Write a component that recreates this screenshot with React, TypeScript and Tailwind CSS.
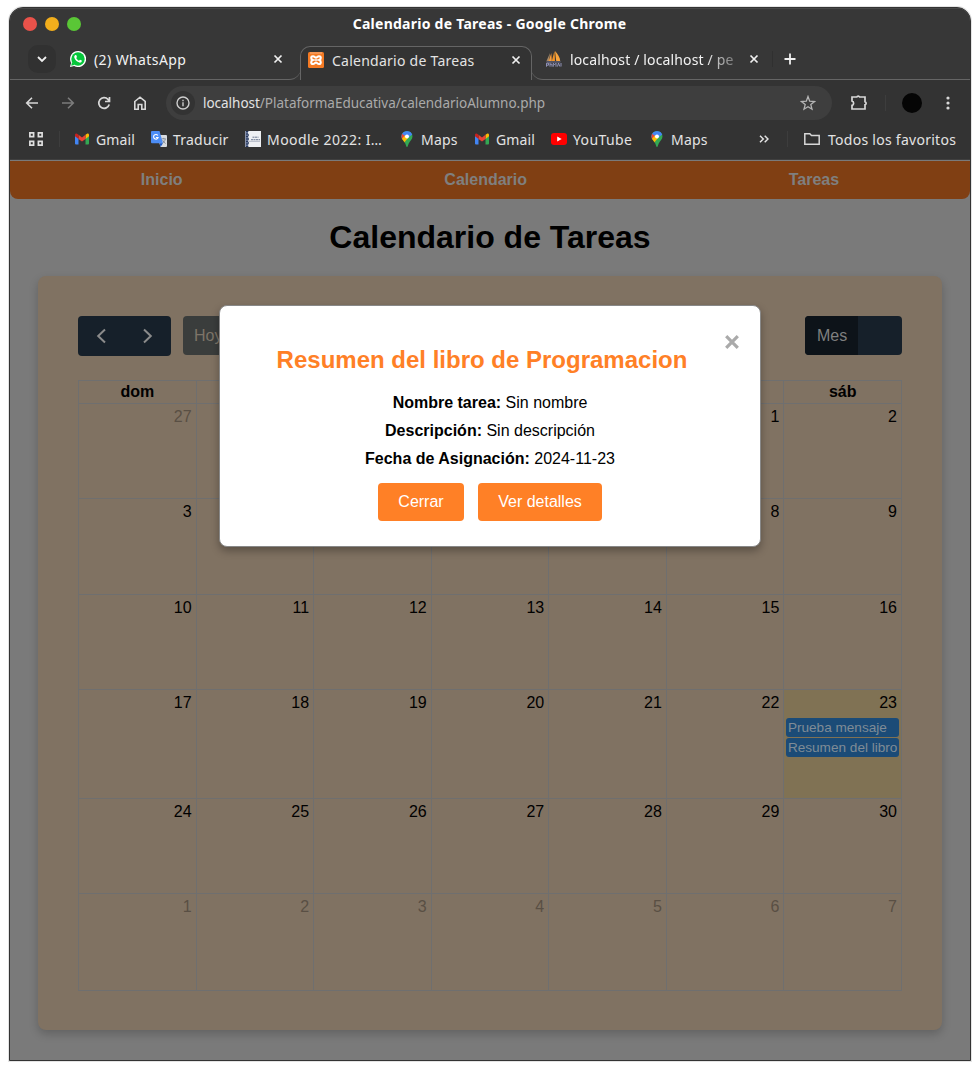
import React from "react";

const UI = "font-['Noto_Sans',sans-serif]";

const days = ["dom", "", "", "", "", "", "sáb"];
const weeks = [
  { h: "h-[95px]", d: [27, null, null, null, null, 1, 2] },
  { h: "h-[96px]", d: [3, null, null, null, null, 8, 9] },
  { h: "h-[95px]", d: [10, 11, 12, 13, 14, 15, 16] },
  { h: "h-[109px]", d: [17, 18, 19, 20, 21, 22, 23] },
  { h: "h-[95px]", d: [24, 25, 26, 27, 28, 29, 30] },
  { h: "h-[97px]", d: [1, 2, 3, 4, 5, 6, 7] },
];

function Close({ className = "" }: { className?: string }) {
  return (
    <svg viewBox="0 0 10 10" className={`h-[10px] w-[10px] shrink-0 ${className}`} stroke="#f0f0f0" strokeWidth="1.7" fill="none">
      <path d="M1.5 1.5l7 7M8.5 1.5l-7 7" />
    </svg>
  );
}

function WhatsApp() {
  return (
    <svg viewBox="0 0 16 16" className="h-4 w-4 shrink-0">
      <path d="M8 0a8 8 0 0 0-6.9 12L0 16l4.1-1.1A8 8 0 1 0 8 0z" fill="#fff" />
      <circle cx="8" cy="8" r="6.7" fill="#06c73b" />
      <path d="M2 11l-.8 3.8 3.7-1z" fill="#06c73b" />
      <path d="M5.4 4.1c-.9.4-1.4 1.300-1.100 2.500.7 2.500 2.700 4.500 5.200 5 1.200.2 2.200-.6 2.300-1.600v-.4L10 8.800l-1 1C7.700 9.300 6.700 8.300 6.200 7.100l.8-1-.8-2z" fill="#fff" />
    </svg>
  );
}

function Xampp() {
  return (
    <svg viewBox="0 0 16 16" className="h-4 w-4 shrink-0">
      <rect width="16" height="16" rx="1.500" fill="#f47a24" />
      <path d="M2 1h12" stroke="#fbc39c" strokeWidth=".8" />
      <path d="M4.800 8C2.500 7 2.700 4.200 5 4.200c1.600 0 1.800 1.500 3 1.500s1.400-1.500 3-1.500c2.300 0 2.500 2.800.2 3.800 2.300 1 2.100 4-.2 4-1.600 0-1.800-1.500-3-1.500S6.600 12 5 12c-2.300 0-2.500-3-.2-4z" fill="none" stroke="#fff" strokeWidth="2" />
      <path d="M6.500 8h3" stroke="#fff" strokeWidth="1.600" />
    </svg>
  );
}

function PhpMyAdmin() {
  return (
    <svg viewBox="0 0 17 16" className="h-4 w-[17px] shrink-0">
      <path d="M5 2L1.500 10H4z" fill="#a98a65" />
      <path d="M6.300 2l.5 8H3.700z" fill="#f59b3b" />
      <path d="M9.500 0L6.800 10h3.200z" fill="#f29325" />
      <path d="M10 0c2.600 3 5 6 5.200 10h-4z" fill="#f9a43c" />
      <path d="M1 10.500h15l-1 .9H2z" fill="#6e7092" />
      <path d="M1.500 15.700v-3.500h2v2h-2M5 11.700v4M5 13.200h2v2.500M8.300 15.700v-3.500l1.300 1.500L11 12.200v3.500M12.500 15.500l1-3.500 1.300 3.500M16 12v3.500" stroke="#9a9cc4" strokeWidth=".9" fill="none" />
    </svg>
  );
}

function Gmail() {
  return (
    <svg viewBox="0 0 16 12" className="h-[12px] w-4 shrink-0">
      <path d="M1 2.500l3.500 2.600V11.500H2A1 1 0 0 1 1 10.500z" fill="#4285f4" />
      <path d="M15 2.500l-3.500 2.600v6.400H14a1 1 0 0 0 1-1z" fill="#34a853" />
      <path d="M11.500 1.800L13 .8c1-.6 2 0 2 1.200v1.200l-3.500 2.700z" fill="#fbbc04" />
      <path d="M4.500 1.800L8 4.500l3.500-2.700v4.100L8 8.600 4.500 5.900z" fill="#ea4335" />
      <path d="M4.500 1.800L3 .8C2 .2 1 .8 1 2v1.200l3.500 2.700z" fill="#c5221f" />
    </svg>
  );
}

function Translate() {
  return (
    <svg viewBox="0 0 16 16" className="h-4 w-4 shrink-0">
      <path d="M6 4h9a1 1 0 0 1 1 1v10a1 1 0 0 1-1 1H9.500z" fill="#d9dce0" />
      <path d="M1 0h7.500l3.500 12.300H1a1 1 0 0 1-1-1V1a1 1 0 0 1 1-1z" fill="#4c8df6" />
      <path d="M8.700 12.300H12L9.500 16z" fill="#1a56c4" />
      <path d="M6.800 4.500A2.300 2.300 0 1 0 7.100 6.500H4.900" stroke="#fff" strokeWidth="1.100" fill="none" />
      <path d="M10.800 7.800h4M12.700 6.900v1M14.300 8c-.3 1.900-1.500 3.300-2.800 4.300M11.700 9.200c.6 1.400 1.500 2.500 2.900 3.300" stroke="#77808e" strokeWidth=".8" fill="none" />
    </svg>
  );
}

function Moodle() {
  return (
    <svg viewBox="0 0 16 16" className="h-4 w-4 shrink-0">
      <rect width="16" height="16" fill="#eef0f3" />
      <path d="M.5 0h3L2.800 2 4 4 3 6l1 2-1 2 1 2-1 2 .5 2h-3z" fill="#26375e" />
      <path d="M2 1v14" stroke="#aebbd4" strokeWidth=".9" strokeDasharray="1.500 1" />
      <path d="M7.500 6.200h6M6 8.700h9" stroke="#6b7890" strokeWidth="1" strokeDasharray="2 .5" />
      <path d="M4 10.300h11" stroke="#8690a5" strokeWidth=".6" />
    </svg>
  );
}

function Pin() {
  return (
    <svg viewBox="0 0 12 16" className="h-4 w-3 shrink-0">
      <defs>
        <clipPath id="pin"><path d="M6 0a5.500 5.500 0 0 0-5.500 5.500C.5 8.500 3 9.800 4.300 12.500 5 14 5.200 16 6 16s1-2 1.700-3.500C9 9.800 11.500 8.500 11.500 5.500A5.500 5.500 0 0 0 6 0z" /></clipPath>
      </defs>
      <g clipPath="url(#pin)">
        <path d="M0 0h12v16H0z" fill="#34a853" />
        <path d="M0 10L11 0H0z" fill="#4285f4" />
        <path d="M0 2l4.500 3.500L0 10z" fill="#ea4335" />
        <path d="M0 8.800L4.300 4 7 7l-5 6z" fill="#fbbc04" />
        <path d="M4.500 5L9 0h3v3L8 6z" fill="#4285f4" />
      </g>
      <circle cx="6" cy="5.500" r="2" fill="#fff" />
    </svg>
  );
}

function YouTube() {
  return (
    <svg viewBox="0 0 16 12" className="h-3 w-4 shrink-0">
      <rect width="16" height="12" rx="3" fill="#f00" />
      <path d="M6.200 3.500v5l4.500-2.500z" fill="#fff" />
    </svg>
  );
}

function Bookmark({ icon, label, box, text }: { icon: React.ReactNode; label: string; box: string; text: string }) {
  return (
    <div className={`flex shrink-0 items-center whitespace-nowrap ${box}`}>
      {icon}
      <span className={text}>{label}</span>
    </div>
  );
}

function Browser() {
  return (
    <header className={`h-[153px] shrink-0 text-[14px] text-[#e3e3e3] ${UI}`}>
      <div className="relative flex h-[32px] items-center justify-center border-t border-[#484848] bg-[#373737]">
        <div className="absolute left-[13px] top-[8px] flex gap-2">
          <i className="h-[14px] w-[14px] rounded-full bg-[#ea524a]" />
          <i className="h-[14px] w-[14px] rounded-full bg-[#f2ae1c]" />
          <i className="h-[14px] w-[14px] rounded-full bg-[#5ac736]" />
        </div>
        <div className="pr-[1px] pb-[2px] text-[14px] font-bold tracking-[0.26px] text-white">Calendario de Tareas - Google Chrome</div>
      </div>

      <div className="flex h-[40px] bg-[#373737]">
        <div className="flex w-[291px] items-center border-b border-[#656565] rounded-br-[12px] pb-px text-[#f2f2f2]">
          <div className="ml-[18px] flex h-7 w-7 items-center justify-center rounded-[10px] bg-[#313131]">
            <svg viewBox="0 0 10 7" className="h-[7px] w-[10px]" fill="none" stroke="#f0f0f0" strokeWidth="1.800"><path d="M1 1l4 4 4-4" /></svg>
          </div>
          <span className="ml-[14px] flex"><WhatsApp /></span>
          <span className="ml-2 w-[179px] tracking-[0.4px]">(2) WhatsApp</span>
          <Close />
        </div>
        <div className="-ml-px mt-[6px] flex h-[34px] w-[232px] items-center rounded-t-[10px] border border-b-0 border-[#656565] bg-[#333] pb-[7px]">
          <span className="ml-[7px] flex"><Xampp /></span>
          <span className="ml-2 w-[179px] whitespace-nowrap tracking-[0.25px]">Calendario de Tareas</span>
          <Close />
        </div>
        <div className="-ml-px flex flex-1 items-center rounded-bl-[12px] border-b border-[#656565] pb-px text-[#f2f2f2]">
          <span className="ml-[14px] flex"><PhpMyAdmin /></span>
          <span className="ml-[8px] w-[167px] overflow-hidden whitespace-nowrap tracking-[0.14px] [mask-image:linear-gradient(to_right,#000_135px,transparent_180px)]">localhost / localhost / pe</span>
          <Close className="ml-[12px]" />
          <i className="ml-[13px] h-4 w-px bg-[#303030]" />
          <svg viewBox="0 0 12 12" className="ml-[11px] h-3 w-3" stroke="#f0f0f0" strokeWidth="1.800"><path d="M6 .5v11M.5 6h11" /></svg>
        </div>
      </div>

      <div className="flex h-[46px] items-center bg-[#333]">
        <svg viewBox="0 0 14 14" className="ml-[15px] h-[14px] w-[14px]" fill="none" stroke="#d8d8d8" strokeWidth="1.600"><path d="M13 7H2M7 1.700L1.700 7 7 12.300" /></svg>
        <svg viewBox="0 0 14 14" className="ml-[22px] h-[14px] w-[14px]" fill="none" stroke="#7c7c7c" strokeWidth="1.600"><path d="M1 7h11M7 1.700L12.300 7 7 12.300" /></svg>
        <svg viewBox="0 0 14 14" className="ml-[22px] h-[14px] w-[14px]" fill="none" stroke="#d8d8d8" strokeWidth="1.700"><path d="M12.200 8.500A5.300 5.300 0 1 1 11 3.400L12 5M12.500 1v4.500H8" /></svg>
        <svg viewBox="0 0 14 14" className="ml-[22px] h-[14px] w-[14px]" fill="none" stroke="#d8d8d8" strokeWidth="1.600"><path d="M1.800 5.500L7 1.200l5.200 4.300v7.700H8.800V8.500H5.200v4.700H1.800z" /></svg>
        <div className="ml-[19px] flex h-[34px] w-[666px] items-center rounded-full bg-[#3e3e3e]">
          <div className="ml-[5px] flex h-6 w-6 items-center justify-center rounded-full bg-[#333]">
            <svg viewBox="0 0 14 14" className="h-[14px] w-[14px]" fill="none" stroke="#cdcdcd" strokeWidth="1.400"><circle cx="7" cy="7" r="6" /><path d="M7 6.200v4M7 3.700v1.500" /></svg>
          </div>
          <div className="ml-2 flex-1 whitespace-nowrap text-[13.500px] tracking-[-0.02px] text-[#aaa]"><span className="text-[#e3e3e3]">localhost</span>/PlataformaEducativa/calendarioAlumno.php</div>
          <svg viewBox="0 0 16 16" className="mr-4 h-4 w-4" fill="none" stroke="#b5b5b5" strokeWidth="1.300"><path d="M8 1.500l1.700 4.700 4.900.3-3.800 3.100 1.200 4.600L8 11.700l-4 2.500 1.200-4.600L1.400 6.500l4.900-.3z" /></svg>
        </div>
        <svg viewBox="0 0 18 18" className="ml-[18px] h-[18px] w-[18px]" fill="none" stroke="#d8d8d8" strokeWidth="1.700"><path d="M2 3h4.800a1.500 1.500 0 0 1 2.800 0H15v4.800a1.500 1.500 0 0 1 0 2.900V15H2v-3.600a2.300 2.300 0 0 0 0-4.400z" /></svg>
        <i className="ml-[17px] h-4 w-px bg-[#3d3d3d]" />
        <i className="ml-[16px] h-5 w-5 rounded-full bg-[#050505]" />
        <svg viewBox="0 0 4 14" className="ml-[24px] h-[14px] w-1" fill="#d8d8d8"><circle cx="2" cy="2" r="1.600" /><circle cx="2" cy="7" r="1.600" /><circle cx="2" cy="12" r="1.600" /></svg>
      </div>

      <div className="flex h-[34px] items-center border-b border-[#3f3f3f] bg-[#333] pb-[7px]">
        <svg viewBox="0 0 14 14" className="ml-[19px] h-[14px] w-[14px]" fill="none" stroke="#e0e0e0" strokeWidth="1.700"><path d="M.9.900h3.700v3.700H.9zM9.400.9h3.700v3.700H9.400zM.9 9.400h3.700v3.700H.9zM9.400 9.400h3.700v3.700H9.400z" /></svg>
        <i className="ml-[16px] h-4 w-px bg-[#3d3d3d]" />
        <Bookmark icon={<Gmail />} label="Gmail" box="ml-[14px] w-[77px]" text="ml-[6px] tracking-[0.1px]" />
        <Bookmark icon={<Translate />} label="Traducir" box="w-[94px]" text="ml-[6px] tracking-[0.22px]" />
        <Bookmark icon={<Moodle />} label="Moodle 2022: I…" box="w-[155px]" text="ml-[6px] tracking-[0.45px]" />
        <Bookmark icon={<Pin />} label="Maps" box="ml-[1px] w-[73px]" text="ml-[8px] tracking-[0.2px]" />
        <Bookmark icon={<Gmail />} label="Gmail" box="w-[77px]" text="ml-[6px] tracking-[0.1px]" />
        <Bookmark icon={<YouTube />} label="YouTube" box="w-[100px]" text="ml-[6px] tracking-[0.4px]" />
        <Bookmark icon={<Pin />} label="Maps" box="w-[108px]" text="ml-[8px] tracking-[0.2px]" />
        <svg viewBox="0 0 10 8" className="h-2 w-[10px] shrink-0" fill="none" stroke="#e3e3e3" strokeWidth="1.500"><path d="M1 .7L4.300 4 1 7.300M5.700.7L9 4 5.700 7.300" /></svg>
        <i className="ml-[18px] h-4 w-px bg-[#3d3d3d]" />
        <svg viewBox="0 0 16 12" className="ml-[16px] h-3 w-4 shrink-0" fill="none" stroke="#d8d8d8" strokeWidth="1.500"><path d="M.8.800h5l1.700 1.700h7.700v8.700H.8z" /></svg>
        <span className="ml-2 whitespace-nowrap tracking-[0.27px]">Todos los favoritos</span>
      </div>
    </header>
  );
}

function Calendar() {
  return (
    <div className="mx-auto mt-[19px] h-[754px] w-[904px] rounded-lg bg-[#807262] px-10 pt-10 shadow-[0_4px_10px_rgba(0,0,0,0.200)]">
      <div className="flex h-10 items-start">
        <div className="flex h-10 w-[93px] items-center justify-between rounded bg-[#16202a] px-[18px]">
          <svg viewBox="0 0 10 16" className="h-4 w-[10px]" fill="none" stroke="#8b8b8b" strokeWidth="2"><path d="M9 1.500L2.200 8 9 14.500" /></svg>
          <svg viewBox="0 0 10 16" className="h-4 w-[10px]" fill="none" stroke="#8b8b8b" strokeWidth="2"><path d="M1 1.500L7.800 8 1 14.500" /></svg>
        </div>
        <div className="ml-3 flex h-[39px] w-14 items-center rounded bg-[#3a3d3c] pl-[11px] text-[#7d7468]">Hoy</div>
        <div className="ml-auto flex h-[39px] w-[97px] overflow-hidden rounded bg-[#16202a] text-[#7f7f7f]">
          <div className="flex w-[53px] items-center bg-[#0d1319] pl-3">Mes</div>
        </div>
      </div>
      <table className="mt-6 w-[824px] table-fixed border-collapse">
        <thead>
          <tr className="h-[23px]">
            {days.map((d, i) => <th key={i} className="border border-[#6f6f6f] p-0 leading-[22px]">{d}</th>)}
          </tr>
        </thead>
        <tbody>
          {weeks.map((w, i) => (
            <tr key={i} className={w.h}>
              {w.d.map((n, j) => {
                const other = (i === 0 && j < 5) || i === 5;
                const today = i === 3 && j === 6;
                return (
                  <td key={j} className={`border border-[#6f6f6f] p-0 align-top ${today ? "bg-[#807254]" : ""}`}>
                    <div className={`pr-1 pt-[3px] text-right leading-5 ${other ? "text-[#594f44]" : ""}`}>{n}</div>
                    {today && (
                      <div className="mx-[2px] mt-[5px] flex flex-col gap-px text-[13.600px] leading-[19px] text-[#7f8b96]">
                        <div className="h-[19px] rounded-[3px] bg-[#1b4b77] pl-[1.500px] whitespace-nowrap">Prueba mensaje</div>
                        <div className="h-[19px] rounded-[3px] bg-[#1b4b77] pl-[1.500px] whitespace-nowrap">Resumen del libro</div>
                      </div>
                    )}
                  </td>
                );
              })}
            </tr>
          ))}
        </tbody>
      </table>
    </div>
  );
}

function Modal() {
  return (
    <section className="absolute left-[209px] top-[144px] h-[242px] w-[542px] rounded-lg border border-[#888] bg-white pt-[38px] text-center shadow-[0_4px_8px_rgba(0,0,0,0.300)]">
      <svg viewBox="0 0 14 14" className="absolute right-[21px] top-[29px] h-[14px] w-[14px]" stroke="#aaa" strokeWidth="3.200"><path d="M1.200 1.200l11.600 11.600M12.800 1.200L1.200 12.800" /></svg>
      <h2 className="mr-[16px] text-2xl leading-8 font-bold text-[#ff8026]">Resumen del libro de Programacion</h2>
      <div className="mt-[13px] leading-7">
        <p><b>Nombre tarea:</b> Sin nombre</p>
        <p><b>Descripción:</b> Sin descripción</p>
        <p><b>Fecha de Asignación:</b> 2024-11-23</p>
      </div>
      <div className="mt-[10px] flex justify-center gap-[14px] text-white">
        <button className="h-[38px] w-[86px] rounded bg-[#ff8026]">Cerrar</button>
        <button className="h-[38px] w-[124px] rounded bg-[#ff8026]">Ver detalles</button>
      </div>
    </section>
  );
}

export default function App() {
  return (
    <div className="h-[1070px] w-[980px] overflow-hidden bg-white pl-[9px] pt-[7px]">
      <div className="flex h-[1054px] w-[962px] flex-col overflow-hidden rounded-t-[14px] border border-[#333] bg-[#7a7a7a] shadow-[0_0_0_1px_#e4e4e4]">
        <Browser />
        <main className="relative flex-1 font-['Liberation_Sans',Arial,sans-serif] text-base text-black">
          <nav className="flex h-[38px] items-center justify-around rounded-b-lg bg-[#803f13] font-bold text-[#7f7f7f]">
            <span>Inicio</span><span>Calendario</span><span>Tareas</span>
          </nav>
          <h1 className="mt-[18px] text-center text-[32px] leading-10 font-bold">Calendario de Tareas</h1>
          <Calendar />
          <Modal />
        </main>
      </div>
    </div>
  );
}
